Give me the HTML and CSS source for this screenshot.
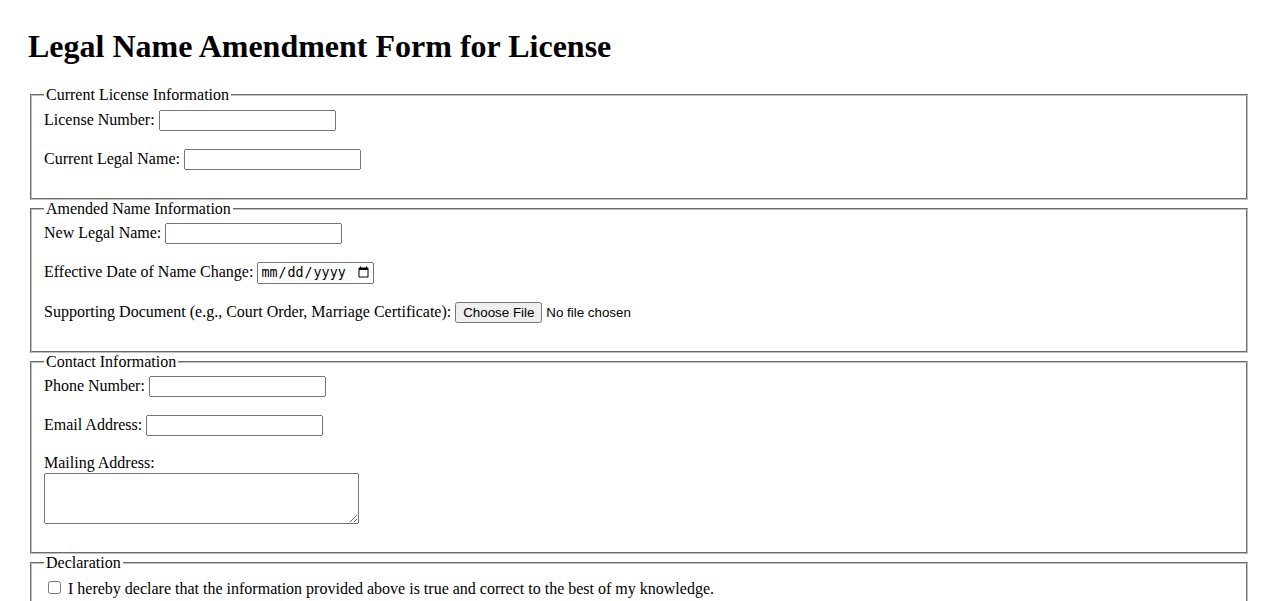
FILE: index.html
```html
<!DOCTYPE html>
<html lang="en">
<head>
    <meta charset="UTF-8">
    <meta name="viewport" content="width=device-width, initial-scale=1.0">
    <title>Legal Name Amendment Form for License</title>
    <link rel="stylesheet" href="styles.css">
</head>
<body>

    <h1>Legal Name Amendment Form for License</h1>

    <form id="amendment-form">
        <fieldset>
            <legend>Current License Information</legend>
            <label for="license-number">License Number:</label>
            <input type="text" id="license-number" name="license-number"><br><br>

            <label for="current-name">Current Legal Name:</label>
            <input type="text" id="current-name" name="current-name"><br><br>
        </fieldset>

        <fieldset>
            <legend>Amended Name Information</legend>
            <label for="new-name">New Legal Name:</label>
            <input type="text" id="new-name" name="new-name"><br><br>

            <label for="effective-date">Effective Date of Name Change:</label>
            <input type="date" id="effective-date" name="effective-date"><br><br>

            <label for="supporting-doc">Supporting Document (e.g., Court Order, Marriage Certificate):</label>
            <input type="file" id="supporting-doc" name="supporting-doc"><br><br>
        </fieldset>

        <fieldset>
            <legend>Contact Information</legend>
            <label for="phone">Phone Number:</label>
            <input type="tel" id="phone" name="phone"><br><br>

            <label for="email">Email Address:</label>
            <input type="email" id="email" name="email"><br><br>

            <label for="address">Mailing Address:</label><br>
            <textarea id="address" name="address" class="address-box"></textarea><br><br>
        </fieldset>

        <fieldset>
            <legend>Declaration</legend>
            <input type="checkbox" id="declare" name="declare">
            <label for="declare">I hereby declare that the information provided above is true and correct to the best of my knowledge.</label><br><br>
        </fieldset>

        <button type="submit" class="submit-btn">Submit Amendment</button>
    </form>

</body>
</html>
```

FILE: styles.css
```css
/* Plain form layout, close to browser defaults */
body {
    font-family: "Liberation Serif", "Times New Roman", serif;
    font-size: 16px;
    margin: 28px;
    color: #000;
    background-color: #fff;
}

h1 {
    font-size: 32px;
    margin: 0 0 21px;
}

fieldset {
    margin: 0 2px;
    padding: 5.6px 12px 10px;
    border: 2px groove #c0c0c0;
}

input[type="text"],
input[type="tel"],
input[type="email"] {
    width: 177px;
    box-sizing: border-box;
    font-family: "Liberation Sans", Arial, sans-serif;
}

input[type="date"] {
    width: 117px;
    box-sizing: border-box;
}

input[type="file"] {
    font-family: "Liberation Sans", Arial, sans-serif;
}

.address-box {
    width: 315px;
    height: 51px;
    margin-top: 1px;
    box-sizing: border-box;
    vertical-align: bottom;
}

.submit-btn {
    margin-top: 10px;
}
```
